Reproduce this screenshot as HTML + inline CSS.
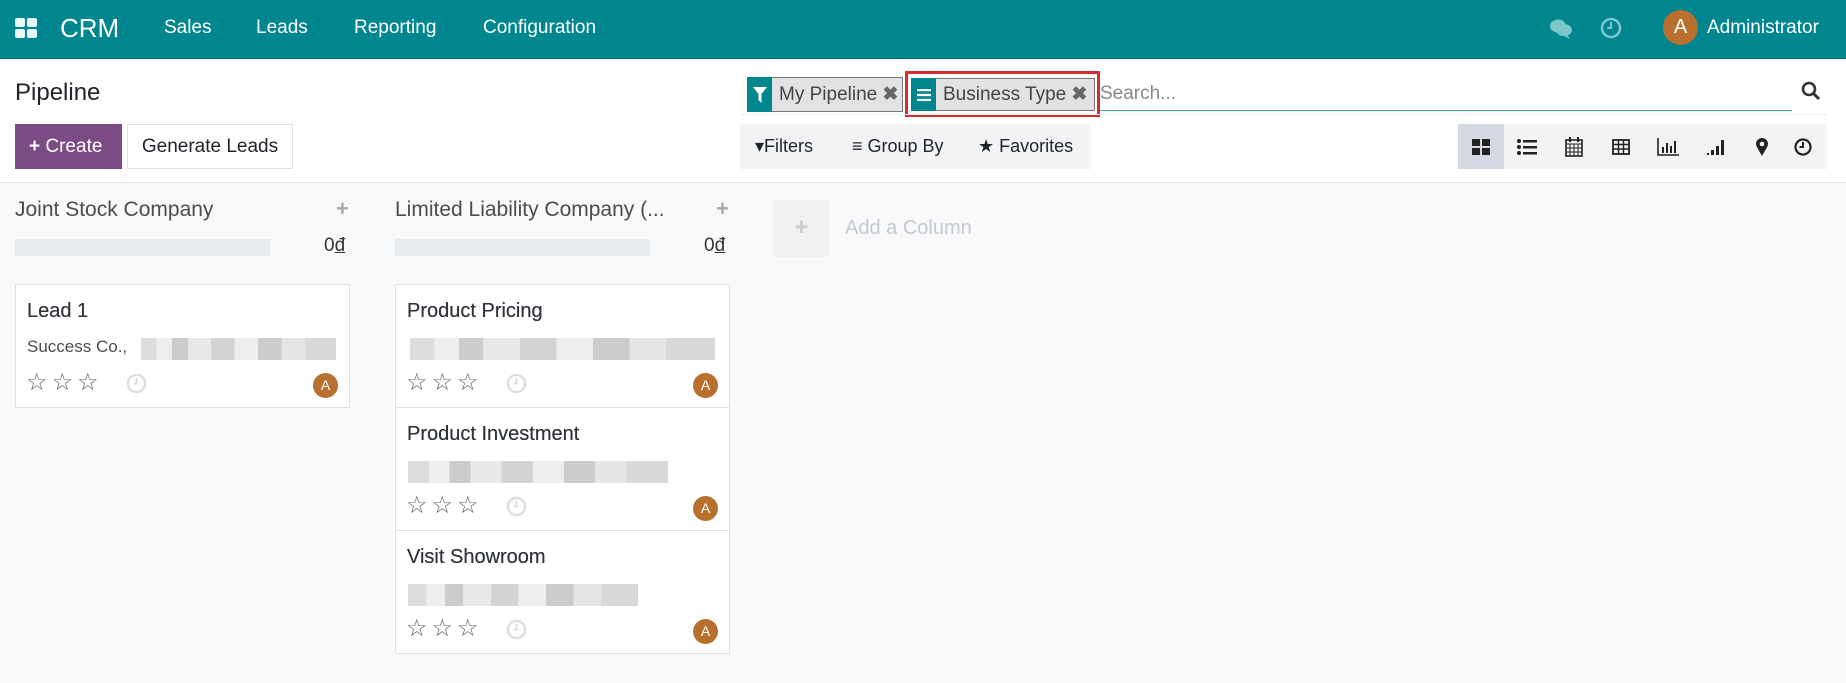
<!DOCTYPE html>
<html><head><meta charset="utf-8"><style>
*{box-sizing:border-box;margin:0;padding:0}
body{width:1846px;height:683px;overflow:hidden;background:#f8f9fa;font-family:"Liberation Sans",Roboto,sans-serif;color:#4c4c4c;position:relative}
.a{position:absolute}
.nav{left:0;top:0;width:1846px;height:59px;background:#00868f;border-bottom:1px solid #0a6a71}
.nav span{position:absolute;color:#fff;font-size:19px;top:17px}
.top{left:0;top:59px;width:1846px;height:124px;background:#fff;border-bottom:1px solid #dee2e6}
.blur{background:linear-gradient(90deg,#ddd 0 8%,#eee 8% 16%,#ccc 16% 24%,#e8e8e8 24% 36%,#d4d4d4 36% 48%,#eee 48% 60%,#ccc 60% 72%,#e5e5e5 72% 84%,#d8d8d8 84% 100%);height:22px}
.card{background:#fff;border:1px solid #dee2e6;position:absolute;width:335px;height:124px}
.card .t{position:absolute;left:11px;top:15px;font-size:20px;color:#2f333a;text-shadow:0 0 0.4px #2f333a}
.card .s{position:absolute;left:11px;top:52px;font-size:17px;color:#4c4c4c}
.stars{position:absolute;left:10px;top:86px;color:#666;font-size:24px;letter-spacing:4px;line-height:24px}
.clk{position:absolute;left:110px;top:88px;width:21px;height:21px}
.av{position:absolute;right:11px;top:88px;width:25px;height:25px;border-radius:50%;background:#b8702f;color:#fff;font-size:14px;text-align:center;line-height:25px}
.vi{position:absolute;top:124px;width:46px;height:45px;display:flex;align-items:center;justify-content:center}
</style></head><body>
<div class="a nav">
<svg class="a" style="left:15px;top:18px" width="22" height="20" viewBox="0 0 22 20"><rect x="0" y="0" width="10" height="9" rx="2" fill="#e8f7f8"/><rect x="12" y="0" width="10" height="9" rx="2" fill="#e8f7f8"/><rect x="0" y="11" width="10" height="9" rx="2" fill="#e8f7f8"/><rect x="12" y="11" width="10" height="9" rx="2" fill="#e8f7f8"/></svg>
<span style="left:60px;top:13px;font-size:26px">CRM</span>
<span style="left:164px">Sales</span><span style="left:256px">Leads</span><span style="left:354px">Reporting</span><span style="left:483px">Configuration</span>
<svg class="a" style="left:1549px;top:18px" width="24" height="22" viewBox="0 0 24 22"><ellipse cx="9" cy="8" rx="8" ry="6.5" fill="#7cc6cc"/><ellipse cx="15" cy="12" rx="8" ry="6" fill="#7cc6cc"/><path d="M18 16l3 5-6-3z" fill="#7cc6cc"/></svg>
<svg class="a" style="left:1600px;top:17px" width="22" height="22" viewBox="0 0 22 22"><circle cx="11" cy="11" r="9" stroke="#7cc6cc" stroke-width="2.5" fill="none"/><path d="M11 5v6H7" stroke="#7cc6cc" stroke-width="2" fill="none"/></svg>
<div class="a" style="left:1663px;top:10px;width:35px;height:35px;border-radius:50%;background:#b8702f;color:#fff;font-size:20px;text-align:center;line-height:35px">A</div>
<span style="left:1707px">Administrator</span>
</div>
<div class="a top">
<div class="a" style="left:15px;top:20px;font-size:24px;color:#212529">Pipeline</div>
<div class="a" style="left:15px;top:65px;width:107px;height:45px;background:#7c4a85;color:#fff;font-size:19px;line-height:45px;padding-left:14px"><b>+</b> Create</div>
<div class="a" style="left:127px;top:65px;width:166px;height:45px;background:#fff;border:1px solid #dee2e6;color:#212529;font-size:19px;line-height:43px;text-align:center">Generate Leads</div>
<div class="a" style="left:747px;top:18px;width:156px;height:35px;background:#e2e2e2;border:1px solid #777;font-size:19px;line-height:33px;padding-left:31px;color:#444">My Pipeline <b style="color:#666">✖</b></div>
<div class="a" style="left:747px;top:18px;width:25px;height:35px;background:#00868f;display:flex;align-items:center;justify-content:center"><svg width="14" height="16" viewBox="0 0 14 16"><path d="M0 0h14L8.5 7v9L5.5 13V7z" fill="#fff"/></svg></div>
<div class="a" style="left:905px;top:12px;width:195px;height:46px;border:3px solid #d32f2f"></div>
<div class="a" style="left:911px;top:19px;width:184px;height:33px;background:#e2e2e2;border:1px solid #777;font-size:19px;line-height:31px;padding-left:31px;color:#444">Business Type <b style="color:#666">✖</b></div>
<div class="a" style="left:911px;top:19px;width:25px;height:33px;background:#00868f;display:flex;align-items:center;justify-content:center"><svg width="14" height="12" viewBox="0 0 14 12"><path d="M0 1h14M0 6h14M0 11h14" stroke="#fff" stroke-width="2.2"/></svg></div>
<div class="a" style="left:1100px;top:24px;font-size:19px;color:#888">Search...</div>
<div class="a" style="left:1100px;top:51px;width:692px;height:1px;background:#3aa0a8"></div>
<div class="a" style="left:740px;top:55px;width:1087px;height:1px;background:#eee"></div>
<svg class="a" style="left:1801px;top:22px" width="20" height="20" viewBox="0 0 20 20"><circle cx="8" cy="8" r="6" stroke="#333" stroke-width="2.6" fill="none"/><path d="M12.5 12.5L18 18" stroke="#333" stroke-width="3"/></svg>
<div class="a" style="left:740px;top:65px;width:351px;height:45px;background:#f2f3f5;font-size:18px;line-height:45px;color:#212529"><span class="a" style="left:15px">▾Filters</span><span class="a" style="left:112px">≡ Group By</span><span class="a" style="left:238px">★ Favorites</span></div>
<div class="a" style="left:1458px;top:65px;width:369px;height:45px;background:#f2f3f5"></div>
</div>
<div class="vi" style="left:1458px;background:#d5d9e3"><svg width="18" height="16"><rect x="0" y="0" width="8" height="7" fill="#222"/><rect x="10" y="0" width="8" height="7" fill="#222"/><rect x="0" y="9" width="8" height="7" fill="#222"/><rect x="10" y="9" width="8" height="7" fill="#222"/></svg></div>
<div class="vi" style="left:1504px"><svg width="20" height="16"><g fill="#222"><circle cx="2" cy="2" r="2"/><circle cx="2" cy="8" r="2"/><circle cx="2" cy="14" r="2"/><rect x="6" y="1" width="14" height="2.5"/><rect x="6" y="7" width="14" height="2.5"/><rect x="6" y="13" width="14" height="2.5"/></g></svg></div>
<div class="vi" style="left:1551px"><svg width="18" height="20"><rect x="1" y="3" width="16" height="16" fill="none" stroke="#222" stroke-width="1.6"/><path d="M1 7h16M1 11h16M1 15h16M5 7v12M9 7v12M13 7v12" stroke="#222"/><rect x="4" y="0" width="2" height="5" fill="#222"/><rect x="12" y="0" width="2" height="5" fill="#222"/></svg></div>
<div class="vi" style="left:1598px"><svg width="18" height="16"><rect x="1" y="1" width="16" height="14" fill="none" stroke="#222" stroke-width="1.8"/><path d="M1 5.5h16M1 10h16M6.5 1v14M11.5 1v14" stroke="#222" stroke-width="1.4"/></svg></div>
<div class="vi" style="left:1645px"><svg width="22" height="18"><path d="M1 0v17h21" stroke="#222" stroke-width="1.6" fill="none"/><g fill="#222"><rect x="5" y="9" width="2" height="6"/><rect x="9" y="5" width="2" height="10"/><rect x="13" y="8" width="2" height="7"/><rect x="17" y="3" width="2" height="12"/></g></svg></div>
<div class="vi" style="left:1694px"><svg width="20" height="18"><g fill="#222"><rect x="0" y="15" width="2" height="2"/><rect x="4" y="12" width="3" height="5"/><rect x="9" y="8" width="3" height="9"/><rect x="14" y="2" width="3" height="15"/></g></svg></div>
<div class="vi" style="left:1739px"><svg width="12" height="18"><path d="M6 18C2 11 0 8 0 6a6 6 0 0 1 12 0c0 2-2 5-6 12z" fill="#222"/><circle cx="6" cy="6" r="2.3" fill="#f2f3f5"/></svg></div>
<div class="vi" style="left:1780px"><svg width="18" height="18"><circle cx="9" cy="9" r="7.5" stroke="#222" stroke-width="2.2" fill="none"/><path d="M9 4v5H5.5" stroke="#222" stroke-width="2" fill="none"/></svg></div>

<div class="a" style="left:15px;top:198px;font-size:21px;color:#4c4c4c">Joint Stock Company</div>
<div class="a" style="left:336px;top:196px;font-size:22px;color:#aaa;font-weight:bold">+</div>
<div class="a" style="left:15px;top:239px;width:255px;height:17px;background:#e9ecef"></div>
<div class="a" style="left:324px;top:235px;font-size:19px;color:#333">0<u>đ</u></div>
<div class="a" style="left:395px;top:198px;font-size:21px;color:#4c4c4c">Limited Liability Company (...</div>
<div class="a" style="left:716px;top:196px;font-size:22px;color:#aaa;font-weight:bold">+</div>
<div class="a" style="left:395px;top:239px;width:255px;height:17px;background:#e9ecef"></div>
<div class="a" style="left:704px;top:235px;font-size:19px;color:#333">0<u>đ</u></div>
<div class="a" style="left:774px;top:200px;width:55px;height:57px;background:#f0f1f3;color:#ccc;font-size:24px;text-align:center;line-height:55px;font-weight:bold">+</div>
<div class="a" style="left:845px;top:217px;font-size:20px;color:#c5c8cc">Add a Column</div>

<div class="card" style="left:15px;top:284px"><div class="t">Lead 1</div><div class="s">Success Co.,</div><div class="a blur" style="left:125px;top:53px;width:195px"></div><div class="stars">☆☆☆</div><svg class="clk" viewBox="0 0 22 22"><circle cx="11" cy="11" r="9" stroke="#ddd" stroke-width="2.5" fill="none"/><path d="M11 5v6H8" stroke="#ddd" stroke-width="2" fill="none"/></svg><div class="av">A</div></div>
<div class="card" style="left:395px;top:284px"><div class="t">Product Pricing</div><div class="a blur" style="left:14px;top:53px;width:305px"></div><div class="stars">☆☆☆</div><svg class="clk" viewBox="0 0 22 22"><circle cx="11" cy="11" r="9" stroke="#ddd" stroke-width="2.5" fill="none"/><path d="M11 5v6H8" stroke="#ddd" stroke-width="2" fill="none"/></svg><div class="av">A</div></div>
<div class="card" style="left:395px;top:407px"><div class="t">Product Investment</div><div class="a blur" style="left:12px;top:53px;width:260px"></div><div class="stars">☆☆☆</div><svg class="clk" viewBox="0 0 22 22"><circle cx="11" cy="11" r="9" stroke="#ddd" stroke-width="2.5" fill="none"/><path d="M11 5v6H8" stroke="#ddd" stroke-width="2" fill="none"/></svg><div class="av">A</div></div>
<div class="card" style="left:395px;top:530px"><div class="t">Visit Showroom</div><div class="a blur" style="left:12px;top:53px;width:230px"></div><div class="stars">☆☆☆</div><svg class="clk" viewBox="0 0 22 22"><circle cx="11" cy="11" r="9" stroke="#ddd" stroke-width="2.5" fill="none"/><path d="M11 5v6H8" stroke="#ddd" stroke-width="2" fill="none"/></svg><div class="av">A</div></div>
</body></html>
